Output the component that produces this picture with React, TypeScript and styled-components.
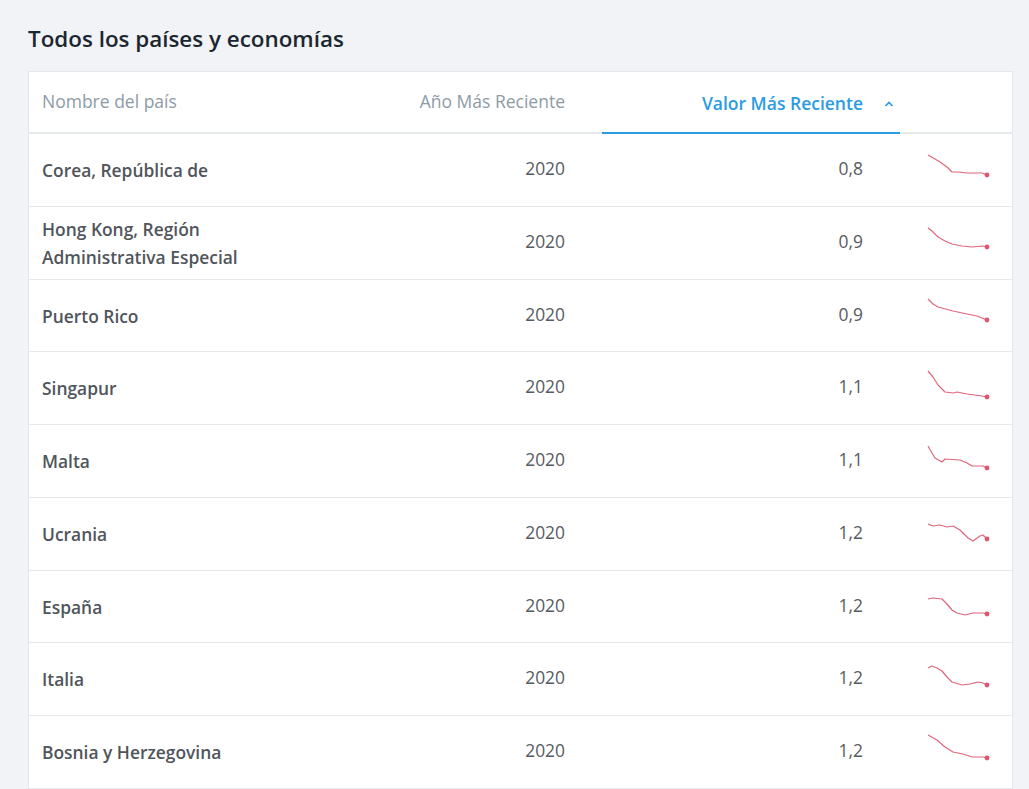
import styled, { createGlobalStyle } from "styled-components";

const GlobalStyle = createGlobalStyle`
    body {
        margin: 0;
        background: #f1f3f6;
        font-family: "Open Sans", "Noto Sans", sans-serif;
    }
`;

const Page = styled.div`
    padding: 24px 16px 0 28px;
`;

const Title = styled.h2`
    margin: 0 0 17px;
    font-size: 22.4px;
    font-weight: 600;
    line-height: 30px;
    color: #1c2630;
`;

const Card = styled.div`
    width: 983px;
    background: #fff;
    border: 1px solid #e3e6ea;
    border-bottom: none;
`;

const COLS = "301px 272px 298px 1fr";

const HeaderRow = styled.div`
    display: grid;
    grid-template-columns: ${COLS};
    height: 60px;
    border-bottom: 2px solid #e6e9ed;
`;

const HeadCell = styled.div<{ $align?: string; $active?: boolean }>`
    position: relative;
    display: flex;
    align-items: center;
    justify-content: ${(p) => (p.$align === "right" ? "flex-end" : "flex-start")};
    padding: ${(p) => (p.$align === "right" ? "0 37px 0 0" : "0 0 0 13px")};
    font-size: 17.5px;
    color: ${(p) => (p.$active ? "#2b9be3" : "#8d9ba6")};
    font-weight: ${(p) => (p.$active ? 600 : 400)};
    margin-top: ${(p) => (p.$active ? "1px" : "-3px")};
    &::after {
        content: "";
        display: ${(p) => (p.$active ? "block" : "none")};
        position: absolute;
        left: 0;
        right: 0;
        bottom: -2px;
        height: 2px;
        background: #2b9be3;
    }
`;

const Chevron = styled.svg`
    position: absolute;
    right: 6px;
    top: 50%;
    margin-top: -2px;
    width: 10px;
    height: 6px;
`;

const Row = styled.div`
    display: grid;
    grid-template-columns: ${COLS};
    height: 71.75px;
    border-bottom: 1px solid #e6e9ec;
`;

const NameCell = styled.div`
    display: flex;
    align-items: center;
    padding: 0 40px 0 13px;
    font-size: 17.4px;
    font-weight: 600;
    line-height: 28px;
    color: #50555b;
`;

const NumCell = styled.div`
    display: flex;
    align-items: center;
    justify-content: flex-end;
    padding: 0 37px 4px 0;
    font-size: 17.4px;
    color: #565b61;
`;

const SparkCell = styled.div`
    padding-left: 25px;
`;

const Spark = styled.svg`
    display: block;
`;

type Item = { name: string; year: number; value: string; pts: number[][] };

const rows: Item[] = [
    { name: "Corea, República de", year: 2020, value: "0,8", pts: [[3, 21], [10, 25], [15, 28], [22, 33], [27, 38], [33, 38], [42, 39], [57, 39], [62, 41]] },
    { name: "Hong Kong, Región Administrativa Especial", year: 2020, value: "0,9", pts: [[3, 21], [7, 24], [13, 30], [20, 34], [27, 37], [37, 39], [47, 40], [57, 39], [62, 40]] },
    { name: "Puerto Rico", year: 2020, value: "0,9", pts: [[3, 19], [8, 24], [13, 27], [28, 31], [42, 34], [52, 36], [57, 38], [62, 40]] },
    { name: "Singapur", year: 2020, value: "1,1", pts: [[3, 19], [8, 25], [13, 33], [20, 40], [28, 41], [32, 40], [42, 42], [57, 44], [62, 45]] },
    { name: "Malta", year: 2020, value: "1,1", pts: [[3, 21], [7, 28], [10, 33], [17, 37], [20, 34], [35, 35], [42, 38], [47, 41], [58, 41], [62, 43]] },
    { name: "Ucrania", year: 2020, value: "1,2", pts: [[3, 26], [8, 28], [15, 27], [22, 29], [28, 28], [35, 32], [43, 40], [48, 43], [55, 38], [58, 37], [62, 41]] },
    { name: "España", year: 2020, value: "1,2", pts: [[3, 28], [8, 27], [17, 28], [22, 33], [27, 39], [32, 42], [40, 44], [48, 42], [58, 42], [62, 43]] },
    { name: "Italia", year: 2020, value: "1,2", pts: [[3, 25], [7, 23], [12, 25], [17, 28], [22, 34], [27, 39], [37, 42], [45, 41], [53, 39], [58, 40], [62, 42]] },
    { name: "Bosnia y Herzegovina", year: 2020, value: "1,2", pts: [[3, 19], [12, 24], [20, 31], [28, 36], [38, 38], [47, 41], [58, 41], [62, 42]] },
];

const Sparkline = ({ pts }: { pts: number[][] }) => {
    const last = pts[pts.length - 1];
    const line = pts.map((p) => p.join(",")).join(" ");
    return (
        <Spark width="70" height="72" viewBox="0 0 70 72">
            <polyline points={line} fill="none" stroke="#e0667a" strokeWidth="1.2" strokeLinejoin="round" />
            <circle cx={last[0]} cy={last[1]} r="2.4" fill="#e0566e" />
        </Spark>
    );
};

const App = () => {
    return (
        <Page>
            <GlobalStyle />
            <Title>Todos los países y economías</Title>
            <Card>
                <HeaderRow>
                    <HeadCell>Nombre del país</HeadCell>
                    <HeadCell $align="right">Año Más Reciente</HeadCell>
                    <HeadCell $align="right" $active>
                        Valor Más Reciente
                        <Chevron viewBox="0 0 10 6">
                            <path d="M1.5 5 L5 1.5 L8.5 5" fill="none" stroke="#2b9be3" strokeWidth="1.6" />
                        </Chevron>
                    </HeadCell>
                    <div />
                </HeaderRow>
                {rows.map((r) => (
                    <Row key={r.name}>
                        <NameCell>{r.name}</NameCell>
                        <NumCell>{r.year}</NumCell>
                        <NumCell>{r.value}</NumCell>
                        <SparkCell>
                            <Sparkline pts={r.pts} />
                        </SparkCell>
                    </Row>
                ))}
            </Card>
        </Page>
    );
};

export default App;
